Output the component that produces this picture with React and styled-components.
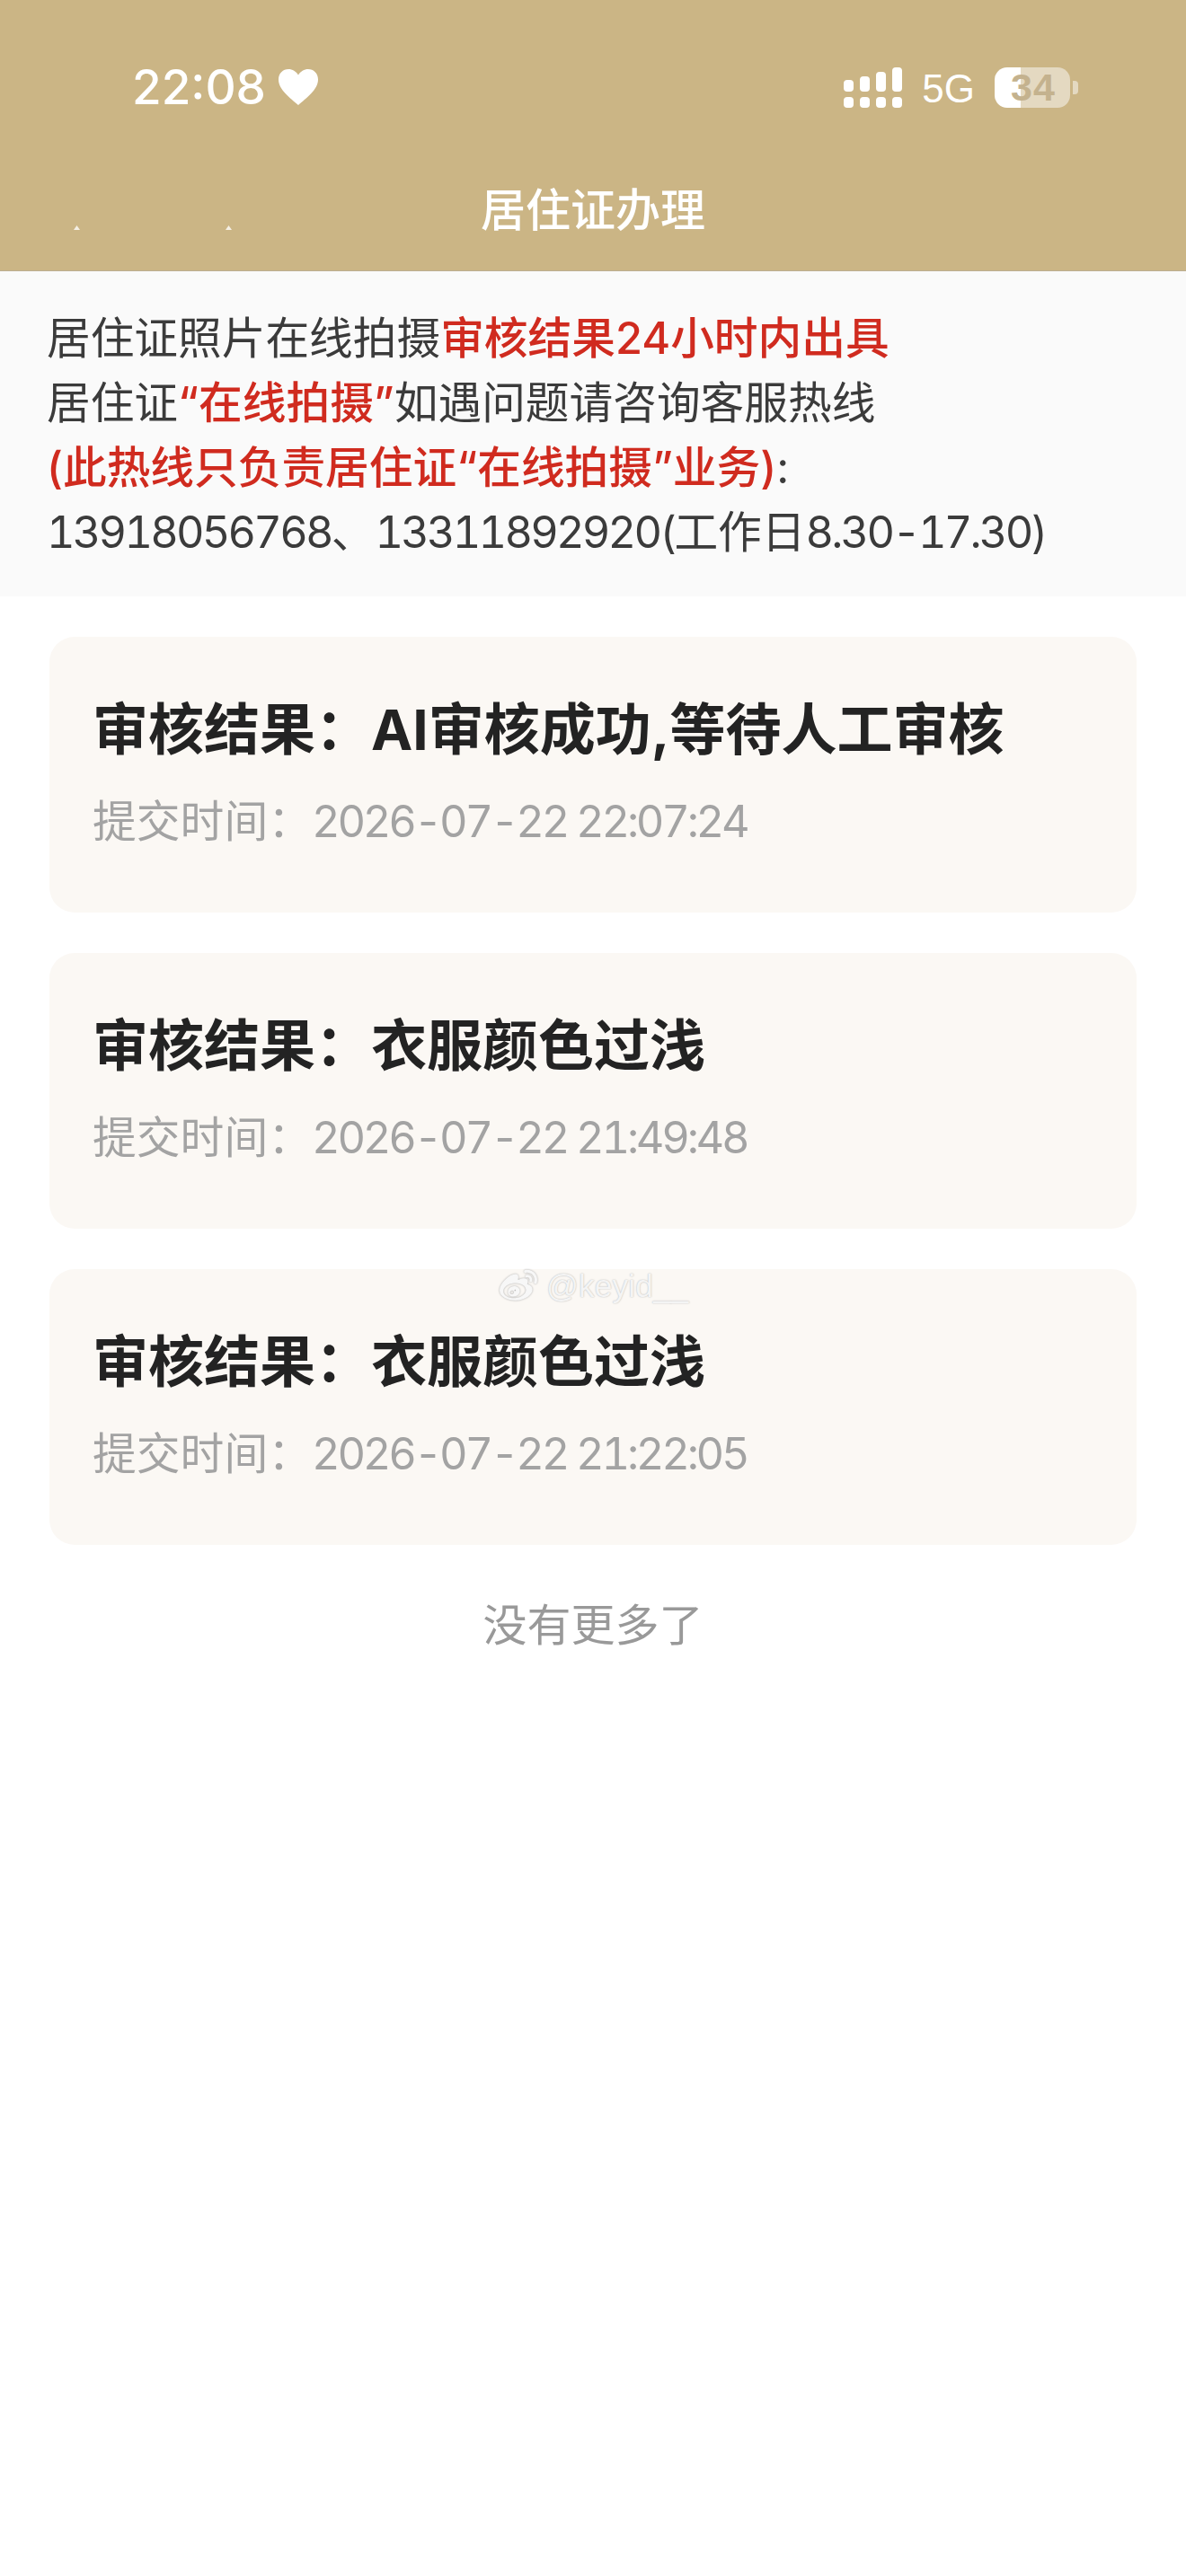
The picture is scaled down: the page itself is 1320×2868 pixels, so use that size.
import styled, { createGlobalStyle } from "styled-components";
import { FaWeibo } from "react-icons/fa";

const GlobalStyle = createGlobalStyle`
  html, body {
    margin: 0;
    padding: 0;
    background: #fff;
  }
  * {
    box-sizing: border-box;
  }
`;

const FONT = `Inter, "Noto Sans CJK SC", sans-serif`;

const Page = styled.div`
  position: relative;
  width: 1320px;
  min-height: 2868px;
  background: #fff;
  font-family: ${FONT};
  overflow: hidden;
`;

const Header = styled.header`
  height: 302px;
  background: #cbb585;
  border-bottom: 1px solid #bcae93;
`;

const StatusBar = styled.div`
  height: 166px;
  padding: 28px 120px 0 147px;
  display: flex;
  justify-content: space-between;
  align-items: center;
  color: #fff;
`;

const Left = styled.div`
  display: flex;
  align-items: center;
  gap: 14px;
`;

const Clock = styled.span`
  font-size: 53px;
  font-weight: 500;
  line-height: 1;
`;

const Right = styled.div`
  display: flex;
  align-items: center;
`;

const Network = styled.span`
  font-family: "Liberation Sans", sans-serif;
  font-size: 44px;
  line-height: 1;
  margin: 4px 22px 0 22px;
`;

const Battery = styled.div`
  position: relative;
  width: 84px;
  height: 45px;
  border-radius: 14px;
  background: linear-gradient(
    to right,
    #fff ${(p) => p.$level}%,
    #e4d9c1 ${(p) => p.$level}%
  );
  display: flex;
  align-items: center;
  justify-content: center;
  margin-right: 3px;
`;

const BatteryText = styled.span`
  font-family: "Liberation Sans", sans-serif;
  font-weight: 700;
  font-size: 43px;
  line-height: 1;
  letter-spacing: 1px;
  color: #c4b28e;
  padding-left: 2px;
`;

const BatteryCap = styled.div`
  width: 6px;
  height: 15px;
  background: #e4d9c1;
  border-radius: 0 4px 4px 0;
`;

const Nav = styled.div`
  position: relative;
  height: 135px;
  display: flex;
  align-items: center;
  justify-content: center;
`;

const NavTitle = styled.h1`
  margin: 0;
  font-size: 50px;
  line-height: 1;
  font-weight: 500;
  color: #fff;
`;

const Speck = styled.span`
  position: absolute;
  top: 85px;
  left: ${(p) => p.$x}px;
  width: 7px;
  height: 5px;
  background: #f4efe4;
  clip-path: polygon(50% 0, 100% 100%, 0 100%);
`;

const Notice = styled.section`
  height: 362px;
  padding: 39px 52px 0;
  background: #fafafa;
  font-size: 48.7px;
  line-height: 72px;
  color: #3b3b3b;
`;

const Line = styled.div`
  white-space: nowrap;
`;

const Red = styled.span`
  color: #d02b1f;
  font-weight: 500;
`;

const Num = styled.span`
  font-variant-numeric: tabular-nums;
  letter-spacing: ${(p) => p.$spacing || "-0.057em"};
`;

const List = styled.main`
  padding: 45px 55px 0;
  display: flex;
  flex-direction: column;
  gap: 45px;
`;

const Card = styled.article`
  height: 307px;
  padding: 68px 48px 0;
  background: #fbf8f4;
  border-radius: 28px;
`;

const CardTitle = styled.div`
  font-size: 62px;
  line-height: 72px;
  font-weight: 700;
  color: #232323;
  white-space: nowrap;
`;

const CardTime = styled.div`
  margin-top: 30px;
  font-size: 48.8px;
  line-height: 72px;
  color: #a3a3a3;
  white-space: nowrap;
`;

const Footer = styled.div`
  margin-top: 54px;
  text-align: center;
  font-size: 49px;
  line-height: 72px;
  color: #999;
`;

const Watermark = styled.div`
  position: absolute;
  left: 552px;
  top: 1410px;
  display: flex;
  align-items: center;
  gap: 6px;
  color: #f4f4f4;
  font-family: "Liberation Sans", sans-serif;
  font-size: 35.5px;
  line-height: 44px;
  text-shadow: 0 0 1.5px #aaa;

  svg {
    width: 50px;
    height: 42px;
    color: #f7f7f7;
    filter: drop-shadow(0 0 1px #aaa);
  }
`;

const records = [
  { result: "AI审核成功,等待人工审核", time: "2026-07-22 22:07:24" },
  { result: "衣服颜色过浅", time: "2026-07-22 21:49:48" },
  { result: "衣服颜色过浅", time: "2026-07-22 21:22:05" },
];

function SignalIcon() {
  const bars = [
    { x: 0, top: 14 },
    { x: 18, top: 10 },
    { x: 36, top: 5 },
    { x: 54, top: 0 },
  ];
  return (
    <svg width="65" height="45" viewBox="0 0 65 45" fill="#fff">
      {bars.map((b) => (
        <g key={b.x}>
          <rect x={b.x} y={b.top} width="11" height={27 - b.top} rx="4" />
          <rect x={b.x} y="33" width="11" height="12" rx="4" />
        </g>
      ))}
    </svg>
  );
}

function HeartIcon() {
  return (
    <svg width="44" height="40" viewBox="0 0 44 40" fill="#fff">
      <path d="M22 40C13 32 0 23 0 11.500C0 4.500 5 0 11 0C15.500 0 19.500 2.500 22 6.500C24.500 2.500 28.500 0 33 0C39 0 44 4.500 44 11.500C44 23 31 32 22 40Z" />
    </svg>
  );
}

export default function App() {
  return (
    <Page>
      <GlobalStyle />
      <Header>
        <StatusBar>
          <Left>
            <Clock>22:08</Clock>
            <HeartIcon />
          </Left>
          <Right>
            <SignalIcon />
            <Network>5G</Network>
            <Battery $level={35}>
              <BatteryText>34</BatteryText>
            </Battery>
            <BatteryCap />
          </Right>
        </StatusBar>
        <Nav>
          <Speck $x={82} />
          <Speck $x={251} />
          <NavTitle>居住证办理</NavTitle>
        </Nav>
      </Header>

      <Notice>
        <Line>
          居住证照片在线拍摄<Red>审核结果24小时内出具</Red>
        </Line>
        <Line>
          居住证<Red>“在线拍摄”</Red>如遇问题请咨询客服热线
        </Line>
        <Line>
          <Red>(此热线只负责居住证“在线拍摄”业务)</Red>:
        </Line>
        <Line>
          <Num>13918056768</Num>、<Num>13311892920(</Num>工作日
          <Num>8.30-17.30)</Num>
        </Line>
      </Notice>

      <List>
        {records.map((r) => (
          <Card key={r.time}>
            <CardTitle>审核结果：{r.result}</CardTitle>
            <CardTime>
              提交时间：<Num $spacing="-0.066em">{r.time}</Num>
            </CardTime>
          </Card>
        ))}
      </List>

      <Footer>没有更多了</Footer>

      <Watermark>
        <FaWeibo />
        <span>@keyid__</span>
      </Watermark>
    </Page>
  );
}
